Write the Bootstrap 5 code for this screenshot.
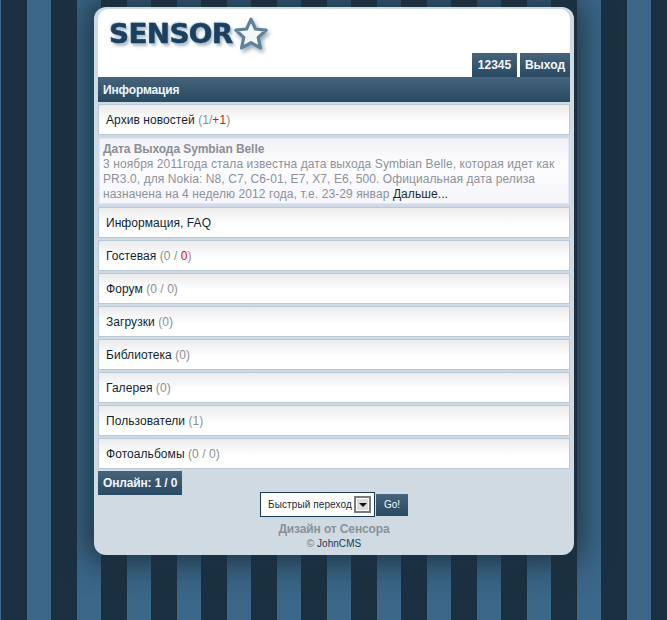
<!DOCTYPE html>
<html lang="ru"><head><meta charset="utf-8"><title>Sensor</title>
<link href="https://cdn.jsdelivr.net/npm/bootstrap@5.3.0/dist/css/bootstrap.min.css" rel="stylesheet">
<style>
html,body{height:620px;overflow:hidden}
body{margin:0;font-family:"Liberation Sans",Arial,sans-serif;font-size:12px;line-height:14px;color:#1b2a3a;
background:repeating-linear-gradient(90deg,#3b6788 0 1px,#1b3040 1px 27px,#3b6788 27px 50px)}
.sheet{width:480px;height:548px;margin:7px 0 0 94px;background:#cfdae3;border-radius:12px;padding:2px 4px 0;box-shadow:0 0 32px 8px rgba(27,48,64,.95)}
.top{height:68px;background:#fff;border-radius:10px 10px 0 0;position:relative}
.brand{position:absolute;left:11px;top:8px;font:bold 26px/34px "DejaVu Sans",sans-serif;letter-spacing:-.6px;color:#1d3f5c;-webkit-text-stroke:.5px #1d3f5c;text-shadow:1px 1px 1px #a9c9e2,-1px -1px 2px #bcd6ea,2px 3px 3px #a8b8c6;transform:scaleX(1.07);transform-origin:left;white-space:nowrap}
.star{position:absolute;left:135px;top:7px;filter:drop-shadow(2px 3px 2px #9aa9b5)}
.tabs{position:absolute;right:0;bottom:0;gap:3px}
.tab,.bar,.online{color:#f2f6fa;font-weight:bold;background:linear-gradient(#46647c,#294a62)}
.tab{height:24px;line-height:25px;text-align:center;width:45px}
.tab+.tab{width:50px}
.bar{height:25px;line-height:26px;padding:0 5px;letter-spacing:-.15px}
.item{height:31px;line-height:31px;margin-bottom:2px;padding:0 7px;border:1px solid #b9c9d6;color:#111f33;background:linear-gradient(#ebebeb,#fff 55%);letter-spacing:.06px}
.item .num{color:#8b8f96}
.item b{font-weight:normal;color:#f00}
.news{height:68px;margin-bottom:2px;padding:4px 4px;border:1px solid #d4d9ee;box-shadow:inset 0 0 0 1px #e2e4f2;line-height:15px;color:#8c9199;background:linear-gradient(#f1f1f6,#fdfdff 40%,#f6f6fb);letter-spacing:.09px}
.news strong{display:block;color:#8a8f94;letter-spacing:-.08px}
.news span{color:#1b2a3a}
.online{height:24px;line-height:25px;width:84px;padding-left:5px;letter-spacing:-.15px}
.jump{gap:1px;margin:-3px 0 0 0;height:25px}
.fake{width:115px;height:25px;border:1px solid #1b3a55;background:#fff;font-size:10px;line-height:23px;padding-left:7px;color:#1b2a3a;position:relative;letter-spacing:.1px}
.arrow{position:absolute;right:3px;top:3px;width:17px;height:17px;background:#dcdcdc;border:2px solid #7a7a7a;box-shadow:inset 0 0 0 1px #fff}
.arrow:after{content:"";position:absolute;left:2.500px;top:5px;border:4px solid transparent;border-top:4px solid #111;border-bottom:0}
.go{width:32px;height:22px;font-size:10px;line-height:22px;text-align:center;color:#f2f6fa;background:linear-gradient(#46647c,#294a62)}
.design{font-weight:bold;color:#8b9198;line-height:14px;margin-top:5px;letter-spacing:-.12px}
.copy{font-size:10px;line-height:12px;margin-top:2px;color:#1b3a55;letter-spacing:.05px}
.copy i{font-style:normal;color:#777}
</style></head><body>
<div class="sheet d-flex flex-column">
 <div class="top">
  <div class="brand">SENSOR</div>
  <svg class="star" width="36" height="36" viewBox="0 0 34 34"><path d="M17 3l4.2 9.3 10.1 1.1-7.5 6.8 2.1 10L17 25.100l-8.900 5.100 2.100-10-7.500-6.800 10.100-1.100z" fill="#f4f7fa" stroke="#5f8199" stroke-width="3" stroke-linejoin="round"/></svg>
  <div class="tabs d-flex"><div class="tab">12345</div><div class="tab">Выход</div></div>
 </div>
 <div class="bar">Информация</div>
 <div style="height:2px"></div>
 <div class="item">Архив новостей <span class="num">(1/<b>+1</b>)</span></div>
 <div class="news"><strong>Дата Выхода Symbian Belle</strong>3 ноября 2011года стала известна дата выхода Symbian Belle, которая идет как PR3.0, для Nokia: N8, C7, C6-01, E7, X7, E6, 500. Официальная дата релиза назначена на 4 неделю 2012 года, т.е. 23-29 январ <span>Дальше...</span></div>
 <div class="item">Информация, FAQ</div>
 <div class="item">Гостевая <span class="num">(0 / <b>0</b>)</span></div>
 <div class="item">Форум <span class="num">(0 / 0)</span></div>
 <div class="item">Загрузки <span class="num">(0)</span></div>
 <div class="item">Библиотека <span class="num">(0)</span></div>
 <div class="item">Галерея <span class="num">(0)</span></div>
 <div class="item">Пользователи <span class="num">(1)</span></div>
 <div class="item">Фотоальбомы <span class="num">(0 / 0)</span></div>
 <div><div class="online">Онлайн: 1 / 0</div></div>
 <div class="jump d-flex justify-content-center align-items-center"><div class="fake">Быстрый переход<span class="arrow"></span></div><div class="go">Go!</div></div>
 <div class="design text-center">Дизайн от Сенсора</div>
 <div class="copy text-center"><i>©</i> JohnCMS</div>
</div>
<script src="https://cdn.jsdelivr.net/npm/bootstrap@5.3.0/dist/js/bootstrap.bundle.min.js"></script>
</body></html>
